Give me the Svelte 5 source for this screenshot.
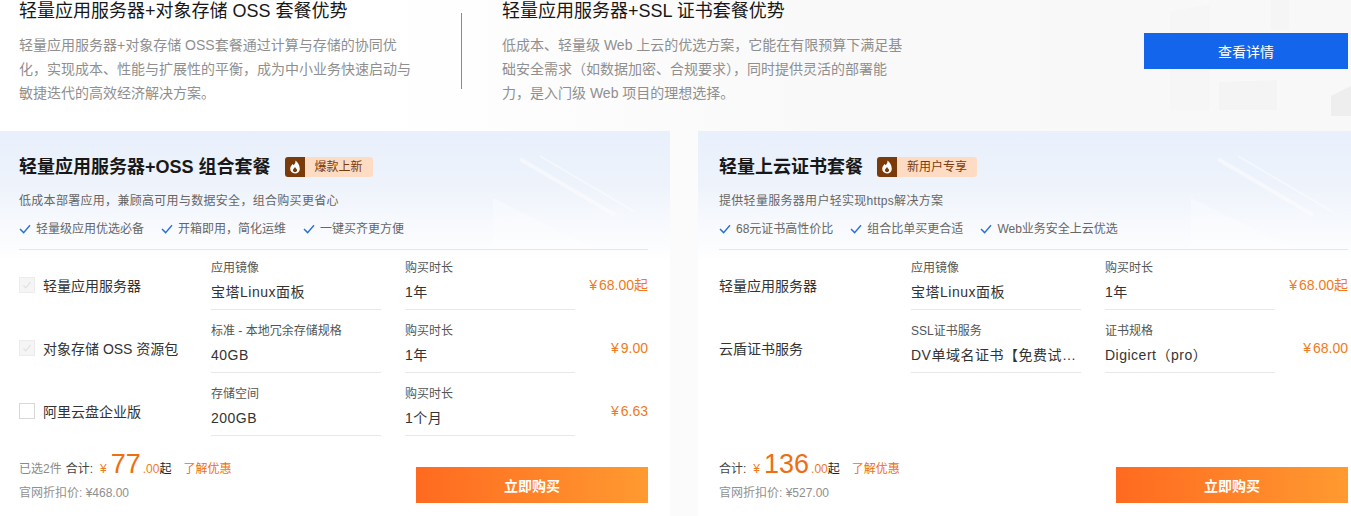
<script>
const cards = [
  {
    title: '轻量应用服务器+OSS 组合套餐',
    badge: '爆款上新',
    sub: '低成本部署应用，兼顾高可用与数据安全，组合购买更省心',
    features: ['轻量级应用优选必备', '开箱即用，简化运维', '一键买齐更方便'],
    checks: true,
    rows: [
      { name: '轻量应用服务器', state: 'locked', l1: '应用镜像', v1: '宝塔Linux面板', l2: '购买时长', v2: '1年', price: '68.00', qi: true },
      { name: '对象存储 OSS 资源包', state: 'locked', l1: '标准 - 本地冗余存储规格', v1: '40GB', l2: '购买时长', v2: '1年', price: '9.00' },
      { name: '阿里云盘企业版', state: 'open', l1: '存储空间', v1: '200GB', l2: '购买时长', v2: '1个月', price: '6.63' }
    ],
    selected: '已选2件',
    total: '77',
    was: '¥468.00'
  },
  {
    title: '轻量上云证书套餐',
    badge: '新用户专享',
    sub: '提供轻量服务器用户轻实现https解决方案',
    features: ['68元证书高性价比', '组合比单买更合适', 'Web业务安全上云优选'],
    checks: false,
    rows: [
      { name: '轻量应用服务器', l1: '应用镜像', v1: '宝塔Linux面板', l2: '购买时长', v2: '1年', price: '68.00', qi: true },
      { name: '云盾证书服务', l1: 'SSL证书服务', v1: 'DV单域名证书【免费试用】', l2: '证书规格', v2: 'Digicert（pro）', price: '68.00' }
    ],
    selected: '',
    total: '136',
    was: '¥527.00'
  }
];
</script>

<div class="page">
  <section class="hero">
    <svg class="hero-deco" width="500" height="131" viewBox="0 0 500 131" aria-hidden="true">
      <path d="M319 12l40-8v106h-40z" fill="#f6f6f6" />
      <path d="M368 82l58-2v30h-58z" fill="#f4f4f4" />
      <path d="M420 0h18v30h-18z" fill="#f5f5f5" />
      <path d="M480 96l20-10v30h-20z" fill="#eeeeee" />
    </svg>
    <div class="intro">
      <h2>轻量应用服务器+对象存储 OSS 套餐优势</h2>
      <p>轻量应用服务器+对象存储 OSS套餐通过计算与存储的协同优化，实现成本、性能与扩展性的平衡，成为中小业务快速启动与敏捷迭代的高效经济解决方案。</p>
    </div>
    <div class="divider"></div>
    <div class="intro second">
      <h2>轻量应用服务器+SSL 证书套餐优势</h2>
      <p>低成本、轻量级 Web 上云的优选方案，它能在有限预算下满足基础安全需求（如数据加密、合规要求），同时提供灵活的部署能力，是入门级 Web 项目的理想选择。</p>
    </div>
    <button class="detail">查看详情</button>
  </section>

  <div class="cards">
    {#each cards as card}
      <article class="card">
        <svg class="card-deco" width="150" height="110" viewBox="0 0 150 110" aria-hidden="true">
          <path d="M3 47l107 53v10H3z" fill="#ffffff" opacity=".3" />
          <path d="M30 8l95 56" stroke="#ffffff" stroke-width="4" opacity=".45" />
          <path d="M50 5l95 56" stroke="#ffffff" stroke-width="2" opacity=".45" />
        </svg>
        <header class="card-head">
          <div class="title-line">
            <h3>{card.title}</h3>
            <span class="badge">
              <span class="flame">
                <svg width="12" height="14" viewBox="0 0 12 14" aria-hidden="true">
                  <path d="M6.4.6c.5 2.4-.7 3.4-1.8 4.7-.3-.6-.6-1-1.1-1.4C2.700 5 1.200 6.400 1.200 8.800c0 2.800 2.100 4.600 4.800 4.600s4.800-1.800 4.800-4.500C10.800 5.500 8.800 2.400 6.400.6zM6 12.200c-1.200 0-2.100-.8-2.100-1.900 0-1.200 1.300-1.900 2.100-3.300.8 1.300 2.100 2.100 2.100 3.300 0 1.100-.9 1.900-2.100 1.900z" fill="#fff" fill-rule="evenodd" />
                </svg>
              </span>
              <span class="badge-text">{card.badge}</span>
            </span>
          </div>
          <p class="sub">{card.sub}</p>
          <ul class="features">
            {#each card.features as feature}
              <li>
                <svg width="12" height="10" viewBox="0 0 12 10" aria-hidden="true">
                  <path d="M1 5l3.600 3.600L11 1.200" fill="none" stroke="#2a6fdb" stroke-width="1.400" />
                </svg>
                {feature}
              </li>
            {/each}
          </ul>
        </header>

        <div class="rows">
          {#each card.rows as row}
            <div class="row">
              <div class="name">
                {#if card.checks}
                  <span class="check" class:locked={row.state === 'locked'}>
                    {#if row.state === 'locked'}
                      <svg width="10" height="10" viewBox="0 0 10 10" aria-hidden="true">
                        <path d="M1.500 5.500l2.300 2.300L8.500 2" fill="none" stroke="#e2e2e2" stroke-width="1.200" />
                      </svg>
                    {/if}
                  </span>
                {/if}
                <span>{row.name}</span>
              </div>
              <div class="field">
                <div class="label">{row.l1}</div>
                <div class="value">{row.v1}</div>
              </div>
              <div class="field last">
                <div class="label">{row.l2}</div>
                <div class="value">{row.v2}</div>
              </div>
              <div class="price"><span class="price-yen">¥</span>{row.price}{row.qi ? '起' : ''}</div>
            </div>
          {/each}
        </div>

        <footer class="card-foot">
          <div class="sum">
            <div class="sum-line">
              {#if card.selected}<span class="muted">{card.selected}</span>{/if}
              <span class="he">合计:</span>
              <span class="yen">¥</span><span class="big">{card.total}</span><span class="cents">.00</span><span class="qi">起</span>
              <a href="#offer" class="offer">了解优惠</a>
            </div>
            <div class="was">官网折扣价: {card.was}</div>
          </div>
          <button class="buy">立即购买</button>
        </footer>
      </article>
    {/each}
  </div>
</div>

<style>
  :global(body) {
    overflow: hidden;
    background: #fff;
  }

  .page {
    width: 1351px;
    height: 516px;
    overflow: hidden;
    font-family: "Liberation Sans", "Noto Sans CJK SC", sans-serif;
    color: #181818;
    background: #fbfbfb;
  }

  .hero {
    position: relative;
    display: flex;
    height: 131px;
    box-sizing: border-box;
    padding-left: 19px;
    background: linear-gradient(90deg, #fff 0%, #fff 28%, #f9f9f9 60%, #f8f8f8 100%);
  }

  .hero-deco {
    position: absolute;
    right: 0;
    top: 0;
  }

  .intro {
    position: relative;
    width: 400px;
  }

  .intro.second {
    width: 402px;
  }

  .intro h2 {
    margin: 0 0 11px;
    font-size: 18px;
    font-weight: 400;
    line-height: 22px;
  }

  .intro p {
    margin: 0;
    font-size: 14px;
    line-height: 24px;
    color: #8f8f8f;
  }

  .divider {
    position: relative;
    width: 1px;
    height: 76px;
    margin: 13px 40px 0 42px;
    background: #8a8a8a;
  }

  .detail {
    position: relative;
    width: 204px;
    height: 36px;
    margin: 33px 0 0 240px;
    border: 0;
    background: #1366ec;
    color: #fff;
    font: inherit;
    font-size: 14px;
  }

  .cards {
    display: flex;
    gap: 28px;
    width: 1370px;
  }

  .card {
    position: relative;
    flex: 0 0 670px;
    min-width: 0;
    height: 385px;
    box-sizing: border-box;
    padding: 0 22px 0 19px;
    background: linear-gradient(180deg, #e8f0fb 0%, #eef3fb 14%, #fbfcfe 29%, #fff 34%);
  }

  .card:last-child {
    flex-basis: 672px;
    padding-left: 21px;
  }

  .card-deco {
    position: absolute;
    left: 490px;
    top: 20px;
  }

  .card-head {
    position: relative;
    height: 119px;
    box-sizing: border-box;
    padding-top: 24px;
    border-bottom: 1px solid #e6e6e6;
  }

  .title-line {
    display: flex;
    align-items: center;
    height: 24px;
  }

  h3 {
    margin: 0 14px 0 0;
    font-size: 18px;
    font-weight: 700;
    line-height: 24px;
  }

  .badge {
    display: flex;
    height: 20px;
    border-radius: 3px;
    overflow: hidden;
    background: #fedcc3;
    font-size: 12px;
    line-height: 20px;
    color: #7a3a0a;
  }

  .flame {
    display: flex;
    align-items: center;
    justify-content: center;
    width: 20px;
    background: #7a3a0a;
  }

  .badge-text {
    padding: 0 10px;
  }

  .sub {
    margin: 13px 0 0;
    font-size: 12px;
    line-height: 18px;
    letter-spacing: .3px;
    color: #666;
  }

  .features {
    display: flex;
    gap: 17px;
    margin: 10px 0 0;
    padding: 0;
    list-style: none;
    font-size: 12px;
    line-height: 18px;
    color: #666;
  }

  .features li {
    display: flex;
    align-items: center;
    gap: 5px;
  }

  .rows {
    position: relative;
    height: 196px;
  }

  .row {
    display: flex;
    height: 63px;
  }

  .name {
    display: flex;
    align-items: center;
    gap: 8px;
    flex: 0 0 192px;
    height: 70px;
    font-size: 14px;
    color: #333;
  }

  .check {
    display: flex;
    align-items: center;
    justify-content: center;
    width: 14px;
    height: 14px;
    border: 1px solid #d8d8d8;
    background: #fff;
  }

  .check.locked {
    border-color: #ececec;
    background: #f5f5f5;
  }

  .field {
    flex: 0 0 170px;
    min-width: 0;
    height: 60px;
    margin-right: 24px;
    box-sizing: border-box;
    padding-top: 10px;
    border-bottom: 1px solid #e8e8e8;
  }

  .field.last {
    margin-right: 8px;
  }

  .label {
    font-size: 12px;
    line-height: 16px;
    color: #555;
  }

  .value {
    margin-top: 6px;
    overflow: hidden;
    white-space: nowrap;
    text-overflow: ellipsis;
    font-size: 14px;
    line-height: 20px;
    letter-spacing: .5px;
    color: #333;
  }

  .price {
    flex: 1;
    min-width: 0;
    height: 70px;
    line-height: 70px;
    text-align: right;
    font-size: 14px;
    white-space: nowrap;
    color: #f07a1c;
  }

  .price-yen {
    margin-right: 2px;
  }

  .card-foot {
    position: relative;
    display: flex;
    justify-content: space-between;
    align-items: flex-start;
  }

  .sum-line {
    display: flex;
    align-items: baseline;
    height: 34px;
    margin-top: 1px;
    font-size: 12px;
    line-height: 34px;
    white-space: nowrap;
  }

  .muted {
    color: #8a8a8a;
    margin-right: 4px;
  }

  .he {
    color: #444;
  }

  .yen {
    margin: 0 4px 0 7px;
    color: #f07a1c;
  }

  .big {
    font-size: 27px;
    color: #ee6f12;
  }

  .cents {
    margin-left: 2px;
    color: #f07a1c;
  }

  .qi {
    color: #222;
  }

  .offer {
    margin-left: 12px;
    color: #ee6f12;
    text-decoration: none;
  }

  .was {
    margin-top: 4px;
    font-size: 12px;
    line-height: 16px;
    color: #8f8f8f;
  }

  .buy {
    width: 232px;
    height: 36px;
    margin-top: 21px;
    border: 0;
    background: linear-gradient(90deg, #ff6a20, #ff9a30);
    color: #fff;
    font: inherit;
    font-size: 14px;
    font-weight: 700;
  }
</style>
